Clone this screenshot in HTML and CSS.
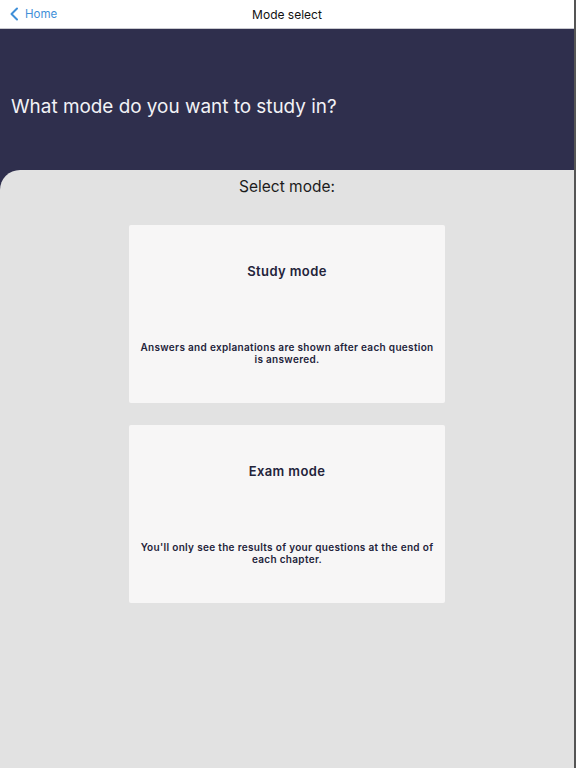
FILE: index.html
```html
<!DOCTYPE html>
<html>
<head>
<meta charset="utf-8">
<link rel="stylesheet" href="styles.css">
</head>
<body>
<div class="screen">
  <header class="nav">
    <a class="back">
      <svg class="chev" width="10" height="14" viewBox="0 0 10 14"><path d="M8 1.5 L2.5 7 L8 12.5" fill="none" stroke="#3f8fd8" stroke-width="2" stroke-linecap="round" stroke-linejoin="round"/></svg>
      <span>Home</span>
    </a>
    <div class="nav-title">Mode select</div>
  </header>
  <div class="main">
    <section class="hero">
      <h1>What mode do you want to study in?</h1>
    </section>
    <section class="panel">
      <h2>Select mode:</h2>
      <div class="cards">
        <div class="card">
          <h3>Study mode</h3>
          <p>Answers and explanations are shown after each question is answered.</p>
        </div>
        <div class="card">
          <h3>Exam mode</h3>
          <p>You'll only see the results of your questions at the end of each chapter.</p>
        </div>
      </div>
    </section>
  </div>
</div>
</body>
</html>
```
FILE: styles.css
```css
html, body {
  margin: 0;
  padding: 0;
}
body {
  width: 576px;
  height: 768px;
  overflow: hidden;
  font-family: Inter, "Liberation Sans", sans-serif;
  background: #e2e2e2;
}
.screen {
  width: 574px;
  height: 768px;
  border-right: 2px solid #555;
  display: flex;
  flex-direction: column;
}
.nav {
  height: 28px;
  background: #fff;
  border-bottom: 1px solid #c9c9cf;
  display: flex;
  align-items: center;
  position: relative;
}
.back {
  display: flex;
  align-items: center;
  gap: 6px;
  padding-left: 9px;
  color: #3f8fd8;
  font-size: 11.5px;
}
.nav-title {
  position: absolute;
  left: 0;
  right: 0;
  text-align: center;
  font-size: 12px;
  color: #111;
  pointer-events: none;
}
.main {
  flex: 1;
  background: #2f2f4d;
  display: flex;
  flex-direction: column;
}
.hero {
  height: 141px;
  display: flex;
  align-items: center;
  padding-left: 11px;
}
.hero h1 {
  margin: 0;
  margin-top: 13px;
  font-size: 18.9px;
  font-weight: 400;
  color: #f2f2f6;
}
.panel {
  flex: 1;
  background: #e2e2e2;
  border-top-left-radius: 20px;
  display: flex;
  flex-direction: column;
  align-items: center;
}
.panel h2 {
  margin: 8px 0 0;
  font-size: 15.5px;
  font-weight: 400;
  color: #1c1c1c;
  line-height: 18px;
}
.cards {
  margin-top: 29px;
  display: flex;
  flex-direction: column;
  gap: 22px;
}
.card {
  width: 316px;
  height: 178px;
  background: #f7f6f6;
  border-radius: 2px;
  display: flex;
  flex-direction: column;
  align-items: center;
  box-sizing: border-box;
  padding: 38px 10px 0;
}
.card h3 {
  margin: 0;
  font-size: 13px;
  font-weight: 600;
  letter-spacing: 0.4px;
  color: #23233a;
  line-height: 16px;
}
.card p {
  margin: 62px 0 0;
  font-size: 10px;
  font-weight: 600;
  letter-spacing: 0.32px;
  line-height: 12px;
  color: #23233a;
  text-align: center;
}
```
